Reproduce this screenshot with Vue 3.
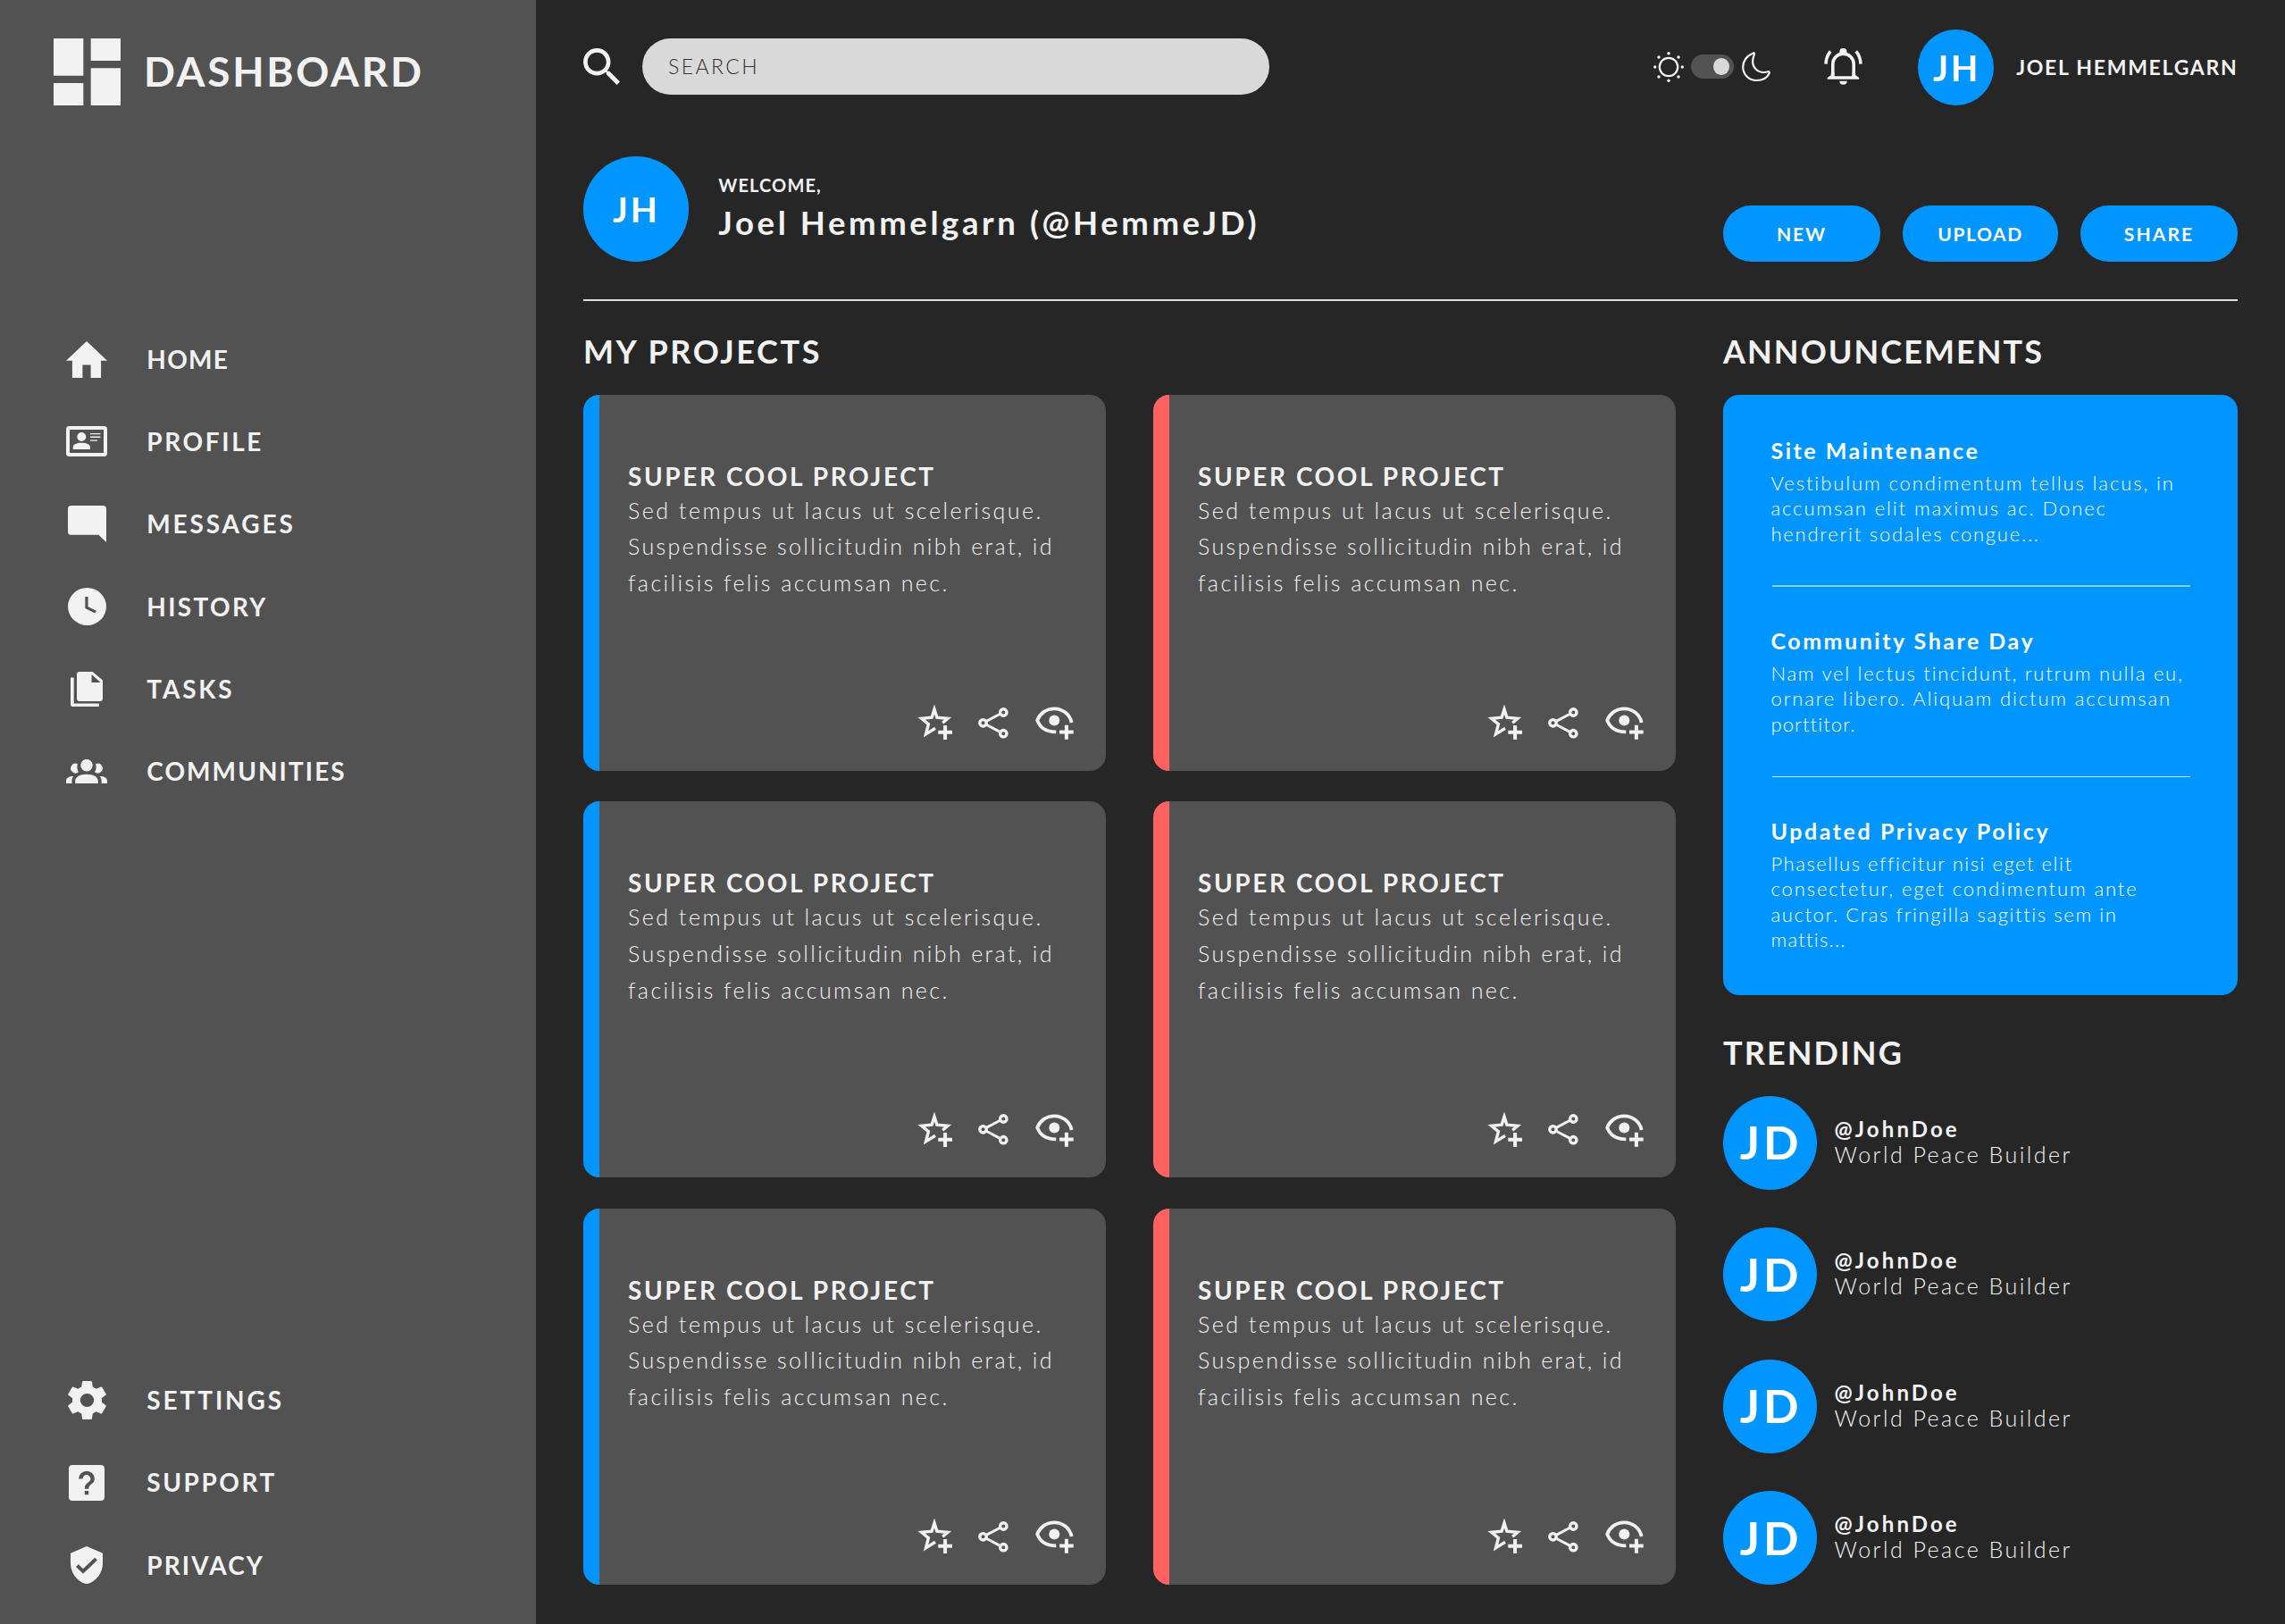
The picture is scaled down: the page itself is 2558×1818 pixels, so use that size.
<script setup>
const mainNav = [
  { label: 'HOME', icon: 'home', ls: 1.28 },
  { label: 'PROFILE', icon: 'profile', ls: 2.6 },
  { label: 'MESSAGES', icon: 'messages', ls: 2.85 },
  { label: 'HISTORY', icon: 'history', ls: 2.32 },
  { label: 'TASKS', icon: 'tasks', ls: 2.79 },
  { label: 'COMMUNITIES', icon: 'communities', ls: 2.05 },
]
const footNav = [
  { label: 'SETTINGS', icon: 'settings', ls: 2.89 },
  { label: 'SUPPORT', icon: 'support', ls: 2.56 },
  { label: 'PRIVACY', icon: 'privacy', ls: 2.11 },
]
const evenOdd = 'evenodd'
const icons = {
  home: { box: '2 3 20 17', w: 46, h: 41, d: 'M10 20v-6h4v6h5v-8h3L12 3 2 12h3v8z' },
  profile: {
    box: '0 0 46 34', w: 46, h: 34,
    d: 'M3.5 0h39A3.5 3.5 0 0 1 46 3.500v27A3.500 3.500 0 0 1 42.500 34h-39A3.500 3.500 0 0 1 0 30.500v-27A3.500 3.500 0 0 1 3.500 0zM4 4v26h38V4zM12.300 12a5 5 0 1 1 10 0a5 5 0 1 1-10 0zM7.700 26v-2.300c0-3 4-4.900 9.600-4.900s9.700 1.900 9.700 4.900V26zM27 7.900h11.400v1.300H27zM27 11.600h11.400v1.300H27zM27 15.400h8v1.300h-8z',
  },
  messages: { box: '2 2 20 20', w: 43, h: 41, d: 'M22 3.500c0-.800-.700-1.500-1.500-1.500h-17C2.700 2 2 2.700 2 3.500v13c0 .800.700 1.500 1.500 1.500H18l4 4z' },
  history: { box: '2 2 20 20', w: 43, h: 42, d: 'M12 2a10 10 0 1 0 0 20 10 10 0 0 0 0-20zM11 6.800h1.500v5.300l4.300 2.200-.700 1.300L11 13z' },
  tasks: {
    box: '0 0 36 39.3', w: 36, h: 39.3,
    d: 'M0 6.400h3.700v29.200H32v3.700H3a3 3 0 0 1-3-3zM10 0h14.700L36 9.500V30a3 3 0 0 1-3 3H10a3 3 0 0 1-3-3V3a3 3 0 0 1 3-3zM23.500 3v9h10z',
  },
  communities: {
    box: '0 0 46 27', w: 46, h: 27,
    d: 'M16.200 6.700a6.800 6.800 0 1 1 13.600 0a6.800 6.800 0 1 1-13.600 0zM10.200 27v-2.500c0-4.800 5-7.700 12.800-7.700s12.800 2.900 12.800 7.700V27zM13 5.300c-1.200 3-.700 6.300 1 9a5.400 5.400 0 1 1-1-9zM33 5.300c1.200 3 .700 6.300-1 9a5.400 5.400 0 1 0 1-9zM0 27v-3c0-3 3-5 8.300-5C7 20.500 6.400 22 6.400 24v3zM46 27v-3c0-3-3-5-8.300-5 1.300 1.500 1.900 3 1.900 5v3z',
  },
  settings: {
    box: '2.2 2 19.6 20', w: 43, h: 43,
    d: 'M12 15.500A3.500 3.500 0 0 1 8.500 12 3.500 3.500 0 0 1 12 8.500a3.500 3.500 0 0 1 3.500 3.500 3.500 3.500 0 0 1-3.500 3.500m7.430-2.530c.04-.32.07-.64.07-.97s-.03-.66-.07-1l2.110-1.630c.19-.15.24-.42.12-.64l-2-3.460c-.12-.22-.39-.31-.61-.22l-2.490 1c-.52-.39-1.060-.73-1.690-.98l-.37-2.650A.506.506 0 0 0 14 2h-4c-.25 0-.46.18-.5.42l-.37 2.650c-.63.25-1.170.59-1.690.98l-2.490-1c-.22-.09-.49 0-.61.22l-2 3.460c-.13.22-.07.49.12.64L4.570 11c-.04.34-.07.67-.07 1s.03.65.07.97l-2.110 1.660c-.19.15-.25.42-.12.64l2 3.460c.12.22.39.3.61.22l2.490-1.010c.52.4 1.060.74 1.690.99l.37 2.650c.04.24.25.42.5.42h4c.25 0 .46-.18.5-.42l.37-2.650c.63-.26 1.170-.59 1.690-.99l2.490 1.010c.22.08.49 0 .61-.22l2-3.460c.12-.22.07-.49-.12-.64z',
  },
  support: {
    box: '3 3 18 18', w: 40, h: 40,
    d: 'M4.800 3h14.400A1.800 1.800 0 0 1 21 4.800v14.400a1.800 1.800 0 0 1-1.800 1.800H4.800A1.800 1.800 0 0 1 3 19.200V4.800A1.800 1.800 0 0 1 4.800 3zM11 18h2v-2h-2zM12 6a4 4 0 0 0-4 4h2a2 2 0 0 1 2-2 2 2 0 0 1 2 2c0 2-3 1.750-3 5h2c0-2.250 3-2.500 3-5a4 4 0 0 0-4-4z',
  },
  privacy: {
    box: '3 1 18 22', w: 36, h: 42.3,
    d: 'M12 1L3 5v6c0 5.550 3.840 10.740 9 12 5.160-1.260 9-6.450 9-12V5zM10 17l-4-4 1.410-1.410L10 14.170l6.590-6.590L18 9z',
  },
}

const accents = ['blue', 'red', 'blue', 'red', 'blue', 'red']
const summary = [
  { text: 'Sed tempus ut lacus ut scelerisque.', ls: 2.5 },
  { text: 'Suspendisse sollicitudin nibh erat, id', ls: 2.38 },
  { text: 'facilisis felis accumsan nec.', ls: 2.44 },
]

const announcements = [
  {
    title: 'Site Maintenance', ls: 2.52,
    lines: [
      { text: 'Vestibulum condimentum tellus lacus, in', ls: 1.9 },
      { text: 'accumsan elit maximus ac. Donec', ls: 1.9 },
      { text: 'hendrerit sodales congue...', ls: 1.77 },
    ],
  },
  {
    title: 'Community Share Day', ls: 2.51,
    lines: [
      { text: 'Nam vel lectus tincidunt, rutrum nulla eu,', ls: 1.74 },
      { text: 'ornare libero. Aliquam dictum accumsan', ls: 1.88 },
      { text: 'porttitor.', ls: 1.1 },
    ],
  },
  {
    title: 'Updated Privacy Policy', ls: 2.57,
    lines: [
      { text: 'Phasellus efficitur nisi eget elit', ls: 1.52 },
      { text: 'consectetur, eget condimentum ante', ls: 1.88 },
      { text: 'auctor. Cras fringilla sagittis sem in', ls: 1.61 },
      { text: 'mattis...', ls: 1.25 },
    ],
  },
]
const spacing = (item) => ({ letterSpacing: item.ls + 'px' })
</script>

<template>
  <div class="app">
    <aside class="sidebar">
      <div class="brand">
        <svg class="brand-mark" viewBox="3 3 18 18"><path d="M3 13h8V3H3zM3 21h8v-6H3zM13 21h8V11h-8zM13 3v6h8V3z" /></svg>
        <span class="brand-name">DASHBOARD</span>
      </div>
      <nav v-for="(group, g) in [mainNav, footNav]" :key="g" :class="g ? 'nav-foot' : 'nav-main'">
        <a v-for="item in group" :key="item.label" class="nav-item">
          <span class="nav-icon">
            <svg :viewBox="icons[item.icon].box" :width="icons[item.icon].w" :height="icons[item.icon].h" preserveAspectRatio="none">
              <path :d="icons[item.icon].d" :fill-rule="evenOdd" />
            </svg>
          </span>
          <span class="nav-label" :style="spacing(item)">{{ item.label }}</span>
        </a>
      </nav>
    </aside>

    <main class="main">
      <header class="topbar">
        <svg class="search-icon" viewBox="3 3 17.49 17.49"><path d="M15.500 14h-.79l-.28-.27A6.471 6.471 0 0 0 16 9.500 6.500 6.500 0 1 0 9.500 16c1.610 0 3.090-.59 4.230-1.570l.27.28v.79l5 4.990L20.490 19l-4.990-5zm-6 0C7.010 14 5 11.990 5 9.500S7.010 5 9.500 5 14 7.010 14 9.500 11.990 14 9.500 14z" /></svg>
        <div class="search">SEARCH</div>
        <div class="theme">
          <svg width="34" height="34" viewBox="0 0 34 34">
            <circle class="sun-ring" cx="17" cy="17" r="10.200" />
            <circle cx="17" cy="1.700" r="1.700" /><circle cx="17" cy="32.300" r="1.700" />
            <circle cx="1.700" cy="17" r="1.700" /><circle cx="32.300" cy="17" r="1.700" />
            <circle cx="6" cy="6" r="1.700" /><circle cx="28" cy="6" r="1.700" />
            <circle cx="6" cy="28" r="1.700" /><circle cx="28" cy="28" r="1.700" />
          </svg>
          <span class="toggle"><i class="knob"></i></span>
          <svg width="33" height="34" viewBox="0 0 33 34">
            <path class="moon" d="M12.600 1.400C5.500 4.500 1.200 10 1.200 17c0 8.500 6.800 15 15.300 15 6.700 0 12-3.200 14.200-8 .5-1.200-.3-2-1.400-1.700-6 1.600-10.400.3-13.600-2.800C12 15.900 11.200 9.500 13.900 2.900c.4-1.200-.3-2-1.300-1.500z" />
          </svg>
        </div>
        <svg class="bell" width="43" height="41" viewBox="0 0 43 41">
          <path d="M17.300 5.500V4a4.100 4.100 0 0 1 8.200 0v1.500zM8 27h3.500v4.300h20V27H35l.4 3.200 3.800 2.800v1.800H3.700V33l3.900-2.800zM17.300 36.800h8.400a4.200 4 0 0 1-8.400 0z" />
          <path class="bell-line" d="M9.800 31.500V17.800a11.700 11.700 0 0 1 23.400 0v13.700M7.200 3.300C3.900 7.300 2.100 12 2 17.600M35.800 3.300c3.300 4 5.100 8.700 5.200 14.300" />
        </svg>
        <span class="avatar avatar-top">JH</span>
        <span class="user-name">JOEL HEMMELGARN</span>
      </header>

      <section class="welcome">
        <span class="avatar avatar-big">JH</span>
        <div class="greeting">
          <div class="hello">WELCOME,</div>
          <div class="full-name">Joel Hemmelgarn (@HemmeJD)</div>
        </div>
        <div class="actions">
          <button class="btn new">NEW</button>
          <button class="btn upload">UPLOAD</button>
          <button class="btn share">SHARE</button>
        </div>
      </section>

      <div class="content">
        <section class="projects">
          <h2 class="heading my">MY PROJECTS</h2>
          <div class="cards">
            <article v-for="(accent, i) in accents" :key="i" class="card">
              <div class="stripe" :class="accent"></div>
              <div class="card-body">
                <h3>SUPER COOL PROJECT</h3>
                <div v-for="line in summary" :key="line.text" class="card-line" :style="spacing(line)">{{ line.text }}</div>
                <div class="card-icons">
                  <svg width="39" height="39" viewBox="0 0 39 39">
                    <path class="line" d="M28.200 20.300L34 15.300 21.900 14.200 19 5 16.100 14.200 4.600 15.300 12.400 21.600 9.500 32.900 20 26.300" />
                    <path class="plus" d="M23.300 30.800H39M31.100 23v16" />
                  </svg>
                  <svg class="share-icon" width="34" height="35" viewBox="0 0 34 35">
                    <path class="thin" d="M8.700 15.600L25 7M8.700 19l16.300 8.600" />
                    <g class="line"><circle cx="5.500" cy="17.300" r="3.700" /><circle cx="28.300" cy="5.500" r="3.700" /><circle cx="28.300" cy="29.200" r="3.700" /></g>
                  </svg>
                  <svg width="43" height="37" viewBox="0 0 43 37">
                    <path class="line eye" d="M40.700 18C38.500 8.500 30.500 2.300 21.300 2.300 12.500 2.300 5.200 7.500 2.200 15.400c3 7.900 10.300 13 21.100 12.900" />
                    <circle cx="21.300" cy="15.400" r="6" />
                    <path class="plus" d="M27 28.600h15.700M34.900 20.800v16" />
                  </svg>
                </div>
              </div>
            </article>
          </div>
        </section>

        <aside class="side">
          <h2 class="heading ann">ANNOUNCEMENTS</h2>
          <div class="panel">
            <article v-for="item in announcements" :key="item.title" class="notice">
              <h4 :style="spacing(item)">{{ item.title }}</h4>
              <div v-for="line in item.lines" :key="line.text" class="notice-line" :style="spacing(line)">{{ line.text }}</div>
            </article>
          </div>
          <h2 class="heading trend">TRENDING</h2>
          <div class="people">
            <div v-for="n in 4" :key="n" class="person">
              <span class="avatar avatar-person">JD</span>
              <div class="person-text">
                <div class="handle">@JohnDoe</div>
                <div class="role">World Peace Builder</div>
              </div>
            </div>
          </div>
        </aside>
      </div>
    </main>
  </div>
</template>

<style>
body { background: #262626; }
</style>

<style scoped>
.app {
  display: grid;
  grid-template-columns: 600px 1958px;
  width: 2558px;
  height: 1818px;
  overflow: hidden;
  box-sizing: border-box;
  background: #262626;
  color: #f2f2f2;
  font-family: Lato, sans-serif;
  font-weight: 700;
  white-space: nowrap;
}
svg { display: block; flex: none; fill: #f2f2f2; }
h2, h3, h4 { margin: 0; font-weight: 700; }

.sidebar { background: #525252; padding-top: 43px; }
.brand { display: flex; align-items: center; height: 75px; padding-left: 59.6px; gap: 26.4px; }
.brand-mark { width: 75px; height: 75px; }
.brand-name { font-size: 46px; line-height: 46px; letter-spacing: 2.68px; padding-bottom: 1px; }
.nav-main { margin-top: 238px; }
.nav-foot { margin-top: 611.5px; }
.nav-item { display: flex; align-items: center; height: 92.3px; padding-left: 74px; gap: 44.3px; }
.nav-icon { display: flex; justify-content: center; width: 46px; }
.nav-label { font-size: 28px; line-height: 34px; padding-bottom: 0.5px; }

.main { box-sizing: border-box; padding: 32px 53px 0; }
.topbar { display: flex; align-items: center; height: 85px; }
.search-icon { width: 41px; height: 41px; margin-right: 25px; }
.search {
  box-sizing: border-box;
  flex: none;
  width: 702px;
  height: 63px;
  margin-right: 429.5px;
  padding-left: 29px;
  border-radius: 32px;
  background: #d9d9d9;
  color: #333;
  font-size: 23px;
  font-weight: 300;
  line-height: 63px;
  letter-spacing: 2.4px;
}
.theme { display: flex; align-items: center; gap: 8.6px; margin-right: 59.5px; }
.sun-ring { fill: none; stroke: #f2f2f2; stroke-width: 2.2px; }
.moon { fill: none; stroke: #f2f2f2; stroke-width: 2.2px; }
.toggle { display: flex; align-items: center; justify-content: flex-end; box-sizing: border-box; width: 48px; height: 27px; padding-right: 5px; border-radius: 14px; background: #525252; }
.knob { width: 18px; height: 19.5px; border-radius: 50%; background: #d9d9d9; }
.bell { margin-right: 61.5px; }
.bell-line { fill: none; stroke: #f2f2f2; stroke-width: 3.6px; }
.avatar { display: flex; flex: none; align-items: center; justify-content: center; box-sizing: border-box; border-radius: 50%; background: #0095ff; color: #fff; }
.avatar-top { width: 85.5px; height: 85.5px; margin: 2px 25px 0 0; padding: 0 0 1px 2px; font-size: 39.5px; letter-spacing: 2.8px; }
.user-name { font-size: 23px; line-height: 28px; letter-spacing: 1.72px; }

.welcome { display: flex; height: 118px; margin-top: 58px; padding-bottom: 42px; border-bottom: 2px solid #d9dcd9; }
.avatar-big { width: 118px; height: 118px; padding: 0 1px 0 2px; font-size: 39px; letter-spacing: 3px; }
.greeting { margin-left: 33.3px; padding-top: 20px; }
.hello { font-size: 20px; line-height: 24px; letter-spacing: 1.12px; }
.full-name { margin-top: 8.5px; font-size: 36.5px; line-height: 43px; letter-spacing: 3.6px; }
.actions { display: flex; align-items: flex-end; margin-left: auto; }
.btn { height: 63px; padding: 0; border: 0; border-radius: 32px; background: #0095ff; color: #fff; font: 700 21px/63px Lato, sans-serif; }
.new { width: 176px; letter-spacing: 1.87px; }
.upload { width: 174px; margin: 0 25px; letter-spacing: 1.59px; }
.share { width: 176px; letter-spacing: 2.13px; }

.content { display: grid; grid-template-columns: 1223px 576px; column-gap: 53px; padding-top: 33.5px; }
.heading { font-size: 36px; line-height: 44px; }
.my { letter-spacing: 2.6px; }
.ann { letter-spacing: 2.05px; }
.trend { margin-top: 42px; letter-spacing: 2.1px; }

.cards { display: grid; grid-template-columns: 585px 585px; grid-auto-rows: 421.2px; gap: 34.4px 53px; margin-top: 27px; }
.card { display: flex; overflow: hidden; border-radius: 18px; background: #525252; }
.stripe { width: 18px; }
.blue { background: #0095ff; }
.red { background: #ff6060; }
.card-body { display: flex; flex: 1; flex-direction: column; padding: 74px 36px 34.5px 32px; }
.card-body h3 { margin-bottom: 1px; font-size: 28px; line-height: 34px; letter-spacing: 2.59px; }
.card-line { font-size: 25px; font-weight: 300; line-height: 40.8px; }
.card-icons { display: flex; align-items: flex-end; justify-content: flex-end; margin-top: auto; }
.share-icon { margin: 0 30px 1.5px 29.5px; }
.line { fill: none; stroke: #f2f2f2; stroke-width: 3.4px; stroke-miterlimit: 10; }
.thin { fill: none; stroke: #f2f2f2; stroke-width: 3px; }
.eye { stroke-width: 3.8px; stroke-linejoin: round; }
.plus { fill: none; stroke: #f2f2f2; stroke-width: 4px; }

.panel { box-sizing: border-box; height: 672px; margin-top: 27px; padding: 47px 53.5px 0; border-radius: 18px; background: #0095ff; color: #fff; }
.notice { display: flex; flex-direction: column; height: 213px; }
.notice h4 { margin-bottom: 8.4px; font-size: 25px; line-height: 30px; }
.notice-line { font-size: 22px; font-weight: 300; line-height: 28.5px; }
.notice:not(:last-child)::after { content: ''; width: 468px; height: 2px; margin: 42.5px 0 0 1px; background: rgba(255, 255, 255, 0.55); }
.notice:nth-child(2)::after { height: 1px; margin-top: 43.5px; background: rgba(255, 255, 255, 0.85); }

.people { display: flex; flex-direction: column; gap: 42.4px; margin-top: 27.4px; }
.person { display: flex; }
.avatar-person { width: 105px; height: 105px; padding: 0 0 2px 2px; font-size: 52px; letter-spacing: 3.8px; }
.person-text { margin-left: 19.5px; padding-top: 23px; }
.handle { font-size: 24px; line-height: 28px; letter-spacing: 3.1px; }
.role { font-size: 25px; font-weight: 300; line-height: 29px; letter-spacing: 2.48px; }
</style>
